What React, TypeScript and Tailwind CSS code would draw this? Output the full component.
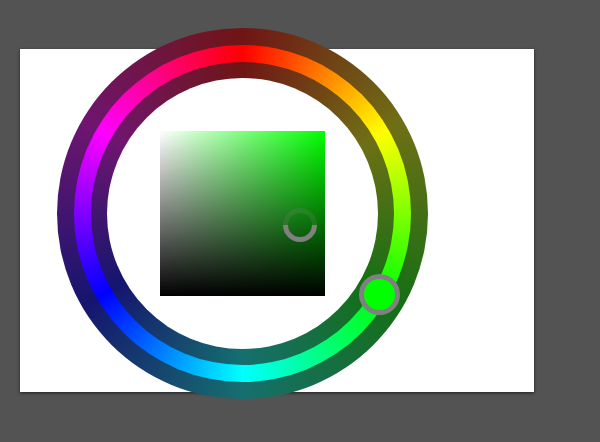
import React from "react";

export default function App() {
  return (
    <div className="w-[600px] h-[442px] bg-[#535353] overflow-hidden pt-[49px] pl-[20px]">
      <div className="relative flex items-start w-[514px] h-[343px] bg-white shadow-[0_1px_3px_rgba(0,0,0,0.6)] pl-[37px]">
        <div className="relative shrink-0 -mt-[21px] w-[371px] h-[371px] rounded-full bg-[conic-gradient(#6f1515,#6f6f15,#156f15,#156f6f,#15156f,#6f156f,#6f1515)] flex items-center justify-center">
          <div className="w-[337px] h-[337px] rounded-full bg-[conic-gradient(#ff0000,#ffff00,#00ff00,#00ffff,#0000ff,#ff00ff,#ff0000)] flex items-center justify-center">
            <div className="w-[303px] h-[303px] rounded-full bg-[conic-gradient(#6f1515,#6f6f15,#156f15,#156f6f,#15156f,#6f156f,#6f1515)] flex items-center justify-center">
              <div className="w-[271px] h-[271px] rounded-full bg-white flex items-center justify-center">
                <div className="relative w-[165px] h-[165px] bg-[#00ff00]">
                  <div className="absolute inset-0 bg-[linear-gradient(to_right,#ffffff,rgba(255,255,255,0))]" />
                  <div className="absolute inset-0 bg-[linear-gradient(to_top,#000000,rgba(0,0,0,0))]" />
                  <svg
                    className="absolute left-[123px] top-[77px]"
                    width="34"
                    height="34"
                    viewBox="0 0 34 34"
                  >
                    <path
                      d="M 2.5 17 A 14.5 14.5 0 0 1 31.5 17"
                      fill="none"
                      stroke="rgba(140,140,140,0.18)"
                      strokeWidth="5"
                    />
                    <path
                      d="M 2.5 17 A 14.5 14.5 0 0 0 31.5 17"
                      fill="none"
                      stroke="#808080"
                      strokeWidth="5"
                    />
                  </svg>
                </div>
              </div>
            </div>
          </div>
          <div className="absolute left-[302px] top-[246px] w-[41px] h-[41px] rounded-full border-[5px] border-[#808080] bg-[#00ff00]" />
        </div>
      </div>
    </div>
  );
}
